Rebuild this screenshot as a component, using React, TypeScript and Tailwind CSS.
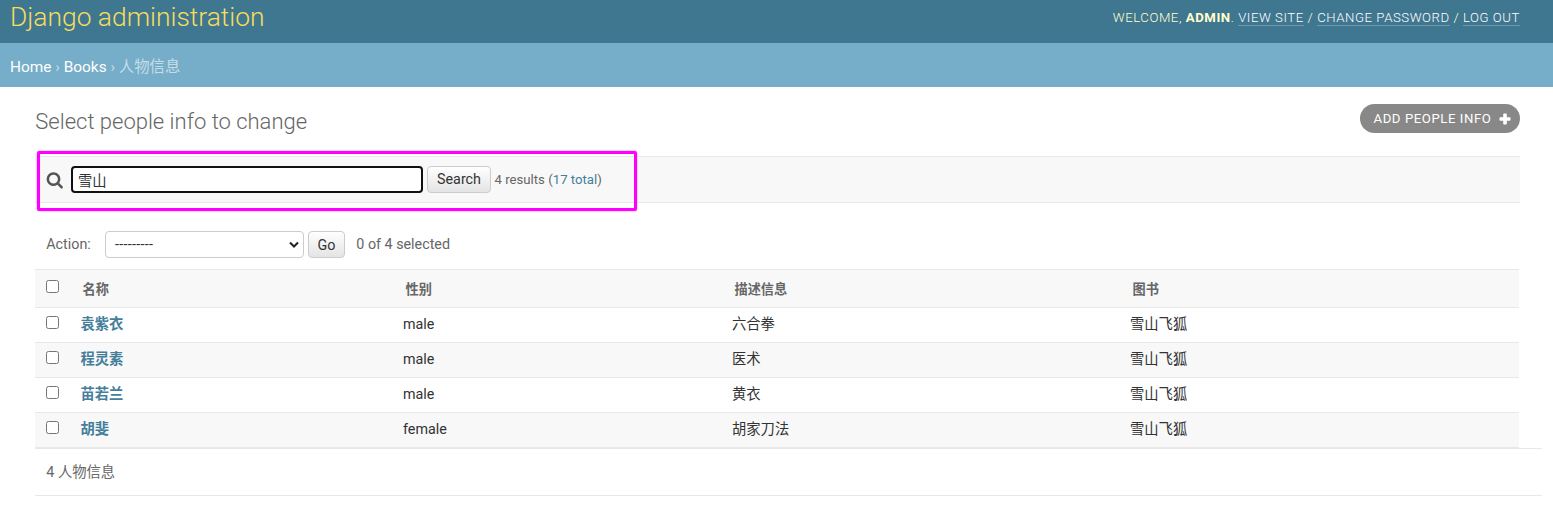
import React from "react";

const people = [
  { name: "袁紫衣", gender: "male", description: "六合拳", book: "雪山飞狐" },
  { name: "程灵素", gender: "male", description: "医术", book: "雪山飞狐" },
  { name: "苗若兰", gender: "male", description: "黄衣", book: "雪山飞狐" },
  { name: "胡斐", gender: "female", description: "胡家刀法", book: "雪山飞狐" },
];

const columns = "grid grid-cols-[45.5px_322.5px_329px_398px_1fr]";

function Checkbox() {
  return (
    <input
      type="checkbox"
      className="block h-[13px] w-[13px] appearance-none rounded-[2.5px] border border-[#767676] bg-white"
    />
  );
}

function Header() {
  return (
    <header className="flex h-[43px] justify-between bg-[#3f7690] pr-[33px] pl-[10px]">
      <h1 className="pt-[1px] text-[26.4px] leading-[32px] font-light whitespace-nowrap text-[#f5dd5d]">
        Django administration
      </h1>
      <div className="pt-[9px] text-[13.2px] leading-[17px] font-light tracking-[0.55px] whitespace-nowrap text-[#ffc] uppercase">
        Welcome, <strong className="font-bold">admin</strong>.{" "}
        <a className="border-b border-white/25 text-white">View site</a> /{" "}
        <a className="border-b border-white/25 text-white">Change password</a> /{" "}
        <a className="border-b border-white/25 text-white">Log out</a>
      </div>
    </header>
  );
}

function Breadcrumbs() {
  return (
    <nav className="h-[44px] bg-[#76adc8] pt-[14px] pl-[10px] text-[15.4px] leading-[20px] whitespace-nowrap text-[#c4dce8]">
      <a className="text-white">Home</a> › <a className="text-white">Books</a> › 人物信息
    </nav>
  );
}

function SearchBar() {
  return (
    <div className="relative mt-[22px] flex h-[47px] items-start border-y border-[#e8e8e8] bg-[#f8f8f8] pt-[9px]">
      <svg viewBox="0 0 1792 1792" className="mt-[5px] ml-[10.500px] h-[17.500px] w-[17.500px] shrink-0" fill="#555">
        <path d="M1216 832q0-185-131.500-316.500t-316.500-131.500-316.500 131.500-131.500 316.500 131.500 316.500 316.500 131.500 316.500-131.500 131.500-316.500zm512 832q0 52-38 90t-90 38q-54 0-90-38l-343-342q-179 124-399 124-143 0-273.500-55.500t-225-150-150-225-55.500-273.500 55.500-273.500 150-225 225-150 273.500-55.500 273.500 55.500 225 150 150 225 55.500 273.500q0 220-124 399l343 343q37 37 37 90z" />
      </svg>
      <input
        defaultValue="雪山"
        className="ml-[8px] h-[27px] w-[352px] rounded-[4px] border-2 border-[#101010] bg-white px-[5px] text-[14.3px] leading-[20px] text-[#333] outline-none"
      />
      <button className="ml-[4px] h-[27px] w-[64px] rounded-[4px] border border-[#ccc] bg-linear-to-b from-white to-[#e4e4e4] pb-[2px] text-[14.3px] leading-[22px] text-[#333]">
        Search
      </button>
      <span className="ml-[3.500px] pt-[5px] text-[13.2px] leading-[18px] whitespace-nowrap text-[#666]">
        4 results (<a className="text-[#447e9b]">17 total</a>)
      </span>
      <div className="pointer-events-none absolute top-[-6.500px] left-[2px] h-[60px] w-[600px] rounded-[2px] border-[3px] border-[#ff00ff] shadow-[0_0_0_0.5px_rgba(255,0,255,0.3)]" />
    </div>
  );
}

function Actions() {
  return (
    <div className="flex h-[66px] items-start pt-[28px] text-[14.3px] leading-[27px] text-[#666]">
      <label className="w-[59px] pl-[11.300px]">Action:</label>
      <div className="ml-[11px] flex h-[27px] w-[199px] items-center justify-between rounded-[4px] border border-[#ccc] bg-white pr-[3px] pl-[9px] text-[#333]">
        <span className="tracking-[0.3px]">---------</span>
        <svg viewBox="0 0 12 8" className="h-[8px] w-[12px]" fill="none" stroke="#222" strokeWidth="2">
          <path d="M2 1.500 6 5.500 10 1.500" />
        </svg>
      </div>
      <button className="ml-[4px] h-[27px] w-[37px] rounded-[4px] border border-[#ccc] bg-linear-to-b from-white to-[#e4e4e4] leading-[26px] text-[#333]">
        Go
      </button>
      <span className="ml-[11.300px]">0 of 4 selected</span>
    </div>
  );
}

function Results() {
  return (
    <div className="mr-px border-t border-[#e8e8e8] text-[14.3px] leading-[20px] text-[#333]">
      <div className={`${columns} h-[38px] border-b border-[#e8e8e8] bg-[#f8f8f8] pt-[10px] text-[13.2px] font-bold text-[#666]`}>
        <div className="pl-[11px]">
          <Checkbox />
        </div>
        <div className="pl-[2px]">名称</div>
        <div className="pl-[2.500px]">性别</div>
        <div className="pl-[2.500px]">描述信息</div>
        <div className="pl-[2.500px]">图书</div>
      </div>
      {people.map((p) => (
        <div key={p.name} className={`${columns} h-[35px] border-b border-[#e8e8e8] pt-[6px] even:bg-white odd:bg-[#f8f8f8]`}>
          <div className="pt-[2px] pl-[11px]">
            <Checkbox />
          </div>
          <a className="font-bold text-[#447e9b]">{p.name}</a>
          <div>{p.gender}</div>
          <div>{p.description}</div>
          <div>{p.book}</div>
        </div>
      ))}
    </div>
  );
}

export default function App() {
  return (
    <div className="h-[521px] w-full overflow-hidden bg-white [font-family:Roboto,'Noto_Sans_CJK_SC',sans-serif]">
      <Header />
      <Breadcrumbs />
      <main className="pl-[35px]">
        <div className="mr-[33px]">
          <div className="flex items-start justify-between pt-[17px]">
            <h2 className="-mb-px pt-[5px] pl-[0.300px] text-[22px] leading-[26px] font-light text-[#666]">
              Select people info to change
            </h2>
            <a className="flex h-[29px] w-[160px] items-center rounded-full bg-[#888] pl-[13.500px] text-[13.2px] tracking-[0.55px] whitespace-nowrap text-white uppercase">
              Add people info
              <svg viewBox="0 0 12 12" className="ml-[8px] h-[12px] w-[12px] shrink-0" fill="white">
                <path d="M5 .500h2a.8.8 0 0 1 .8.800v2.900h2.900a.8.8 0 0 1 .8.800v2a.8.8 0 0 1-.8.800H7.800v2.900a.8.8 0 0 1-.8.800H5a.8.8 0 0 1-.8-.800V7.800H1.300a.8.8 0 0 1-.8-.800V5a.8.8 0 0 1 .8-.800h2.900V1.300A.8.8 0 0 1 5 .500z" />
              </svg>
            </a>
          </div>
          <SearchBar />
          <Actions />
          <Results />
        </div>
        <div className="mr-[11px] h-[48px] border-y border-[#e8e8e8] pt-[13px] pl-[11.300px] text-[14.3px] leading-[20px] text-[#666]">
          4 人物信息
        </div>
      </main>
    </div>
  );
}
